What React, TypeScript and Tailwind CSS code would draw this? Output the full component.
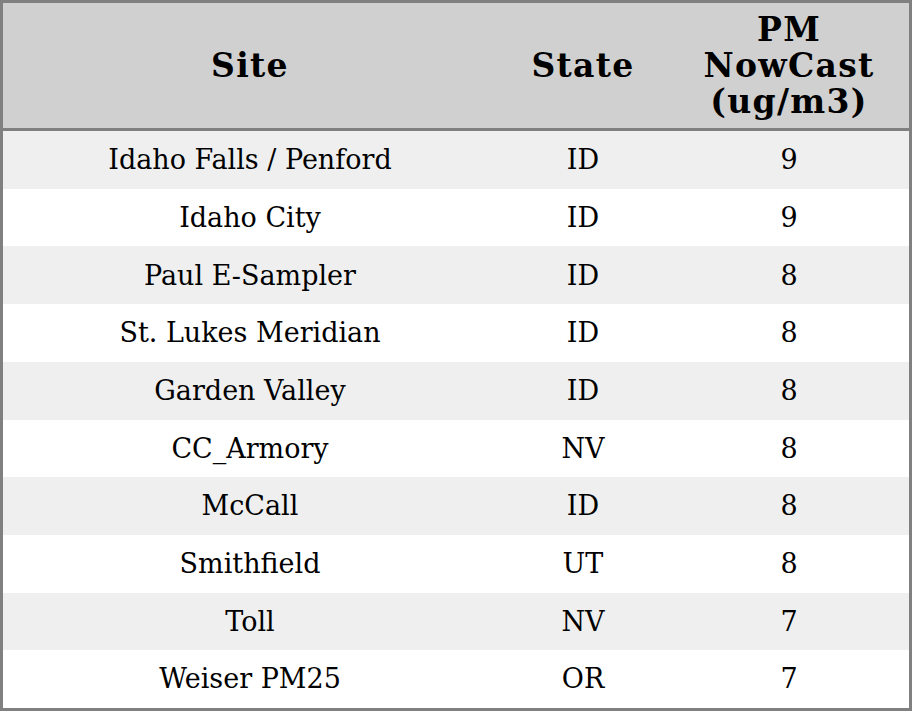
const rows = [
  { site: "Idaho Falls / Penford", state: "ID", pm: 9 },
  { site: "Idaho City", state: "ID", pm: 9 },
  { site: "Paul E-Sampler", state: "ID", pm: 8 },
  { site: "St. Lukes Meridian", state: "ID", pm: 8 },
  { site: "Garden Valley", state: "ID", pm: 8 },
  { site: "CC_Armory", state: "NV", pm: 8 },
  { site: "McCall", state: "ID", pm: 8 },
  { site: "Smithfield", state: "UT", pm: 8 },
  { site: "Toll", state: "NV", pm: 7 },
  { site: "Weiser PM25", state: "OR", pm: 7 },
];

const App = () => {
  return (
    <div
      className="w-[912px] h-[711px] bg-white text-black border-[3px] border-[#808080] flex flex-col"
      style={{ fontFamily: '"DejaVu Serif", "Liberation Serif", serif' }}
    >
      {/* Header */}
      <div className="grid grid-cols-[494px_172px_1fr] h-[128px] bg-[#d0d0d0] border-b-[3px] border-[#808080] text-[33px] leading-[36px] tracking-[1.3px] font-bold shrink-0">
        <div className="flex items-center justify-center pt-[1px]">Site</div>
        <div className="flex items-center justify-center pt-[1px]">State</div>
        <div className="flex items-center justify-center text-center">
          PM
          <br />
          NowCast
          <br />
          (ug/m3)
        </div>
      </div>

      {/* Rows */}
      <div className="flex-1 flex flex-col">
        {rows.map((r, i) => (
          <div
            key={r.site}
            className={`flex-1 grid grid-cols-[494px_172px_1fr] text-[27px] pt-[1px] ${
              i % 2 === 0 ? "bg-[#efefef]" : "bg-white"
            }`}
          >
            <div className="flex items-center justify-center">{r.site}</div>
            <div className="flex items-center justify-center">{r.state}</div>
            <div className="flex items-center justify-center">{r.pm}</div>
          </div>
        ))}
      </div>
    </div>
  );
};

export default App;
